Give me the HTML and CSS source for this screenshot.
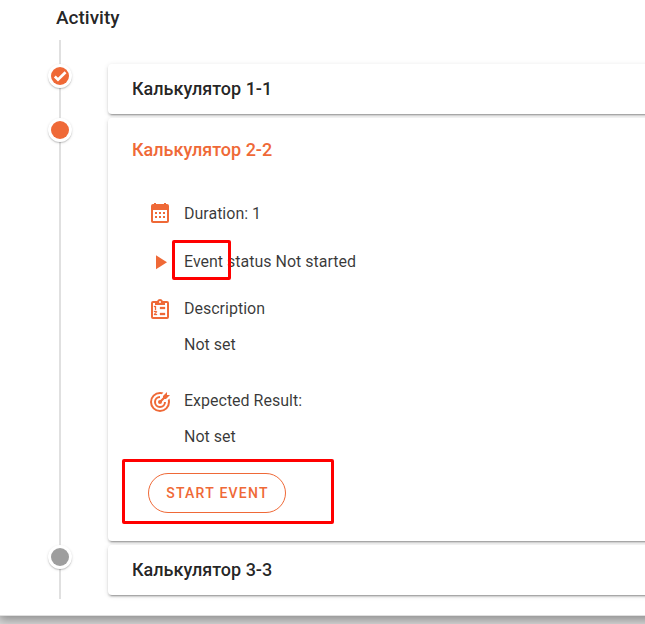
FILE: index.html
```html
<!DOCTYPE html>
<html lang="en">
<head>
<meta charset="utf-8">
<title>Activity</title>
<link rel="stylesheet" href="styles.css">
</head>
<body>
<main class="panel">
  <h1 class="title">Activity</h1>
  <div class="timeline">
    <div class="item">
      <div class="divider"><span class="dot"><span class="dot-inner"><svg viewBox="0 0 24 24"><path d="M9 20.42 2.79 14.21 5.62 11.38 9 14.77 18.88 4.88 21.71 7.71Z"/></svg></span></span></div>
      <section class="card"><h2 class="card-title">Калькулятор 1-1</h2></section>
    </div>
    <div class="item">
      <div class="divider"><span class="dot"><span class="dot-inner"></span></span></div>
      <section class="card card-open">
        <h2 class="card-title active">Калькулятор 2-2</h2>
        <div class="details">
          <div class="row">
            <svg class="icon" viewBox="0 0 24 24"><path d="M9 10V12H7V10H9M13 10V12H11V10H13M17 10V12H15V10H17M19 2A2 2 0 0 1 21 4V19A2 2 0 0 1 19 21H5C3.89 21 3 20.1 3 19V4A2 2 0 0 1 5 2H6V1H8V2H16V1H18V2H19M19 19V8H5V19H19M9 14V16H7V14H9M13 14V16H11V14H13M17 14V16H15V14H17Z"/></svg>
            <span>Duration: 1</span>
          </div>
          <div class="row status">
            <svg class="icon" viewBox="0 0 24 24"><path d="M8 5.14V19.14L19 12.14Z"/></svg>
            <span>Event status Not started</span>
            <span class="mark mark-word"></span>
          </div>
          <div class="row description">
            <svg class="icon" viewBox="0 0 24 24"><path fill-rule="evenodd" d="M19 3H14.82C14.4 1.84 13.3 1 12 1S9.6 1.84 9.18 3H5A2 2 0 0 0 3 5V19A2 2 0 0 0 5 21H19A2 2 0 0 0 21 19V5A2 2 0 0 0 19 3ZM12 3A1 1 0 1 1 12 5A1 1 0 0 1 12 3ZM5 5H7V7H17V5H19V19H5Z"/><path d="M7 12H8V8H6V9H7ZM12 9H17V11H12ZM12 15H17V17H12ZM6 14V13H8.25A.75.75 0 0 1 9 13.75C9 13.95 8.92 14.14 8.79 14.27L7.12 16H9V17H6V16.08L8 14Z" class="list"/></svg>
            <span>Description</span>
          </div>
          <p class="value">Not set</p>
          <div class="row result">
            <svg class="icon" viewBox="0 0 24 24"><path d="M12 2A10 10 0 1 0 22 12C22 10.84 21.79 9.69 21.39 8.61L19.79 10.21C19.93 10.8 20 11.4 20 12A8 8 0 1 1 12 4C12.6 4 13.2 4.07 13.79 4.21L15.4 2.6C14.31 2.21 13.16 2 12 2M19 2 15 6V7.5L12.45 10.05C12.3 10 12.15 10 12 10A2 2 0 1 0 14 12C14 11.85 14 11.7 13.95 11.55L16.5 9H18L22 5H19V2M12 6A6 6 0 1 0 18 12H16A4 4 0 1 1 12 8V6Z"/></svg>
            <span>Expected Result:</span>
          </div>
          <p class="value">Not set</p>
          <div class="action">
            <button class="button" type="button">START EVENT</button>
            <span class="mark mark-button"></span>
          </div>
        </div>
      </section>
    </div>
    <div class="item">
      <div class="divider"><span class="dot"><span class="dot-inner idle"></span></span></div>
      <section class="card"><h2 class="card-title">Калькулятор 3-3</h2></section>
    </div>
  </div>
</main>
</body>
</html>
```
FILE: styles.css
```css
* {
  box-sizing: border-box;
}

body {
  margin: 0;
  height: 624px;
  overflow: hidden;
  background: #dadada;
  color: rgba(0, 0, 0, .87);
  font-family: Roboto, sans-serif;
}

.panel {
  width: 665px;
  height: 616px;
  border-bottom: 1px solid #e0e0e0;
  background: #fff;
  box-shadow: 0 3px 10px 1px rgba(0, 0, 0, .36);
}

.title {
  height: 40px;
  margin: 0;
  padding: 6px 0 0 56px;
  font-size: 19px;
  font-weight: 500;
  line-height: 24px;
}

.timeline {
  height: 559px;
  padding-top: 24px;
  background: linear-gradient(#e0e0e0, #e0e0e0) 59px 0 / 2px 100% no-repeat;
}

.item {
  display: flex;
  margin-bottom: 4px;
}

.divider {
  width: 108px;
  padding-left: 48px;
}

.dot {
  display: flex;
  align-items: center;
  justify-content: center;
  width: 24px;
  height: 24px;
  border-radius: 50%;
  background: #fff;
  box-shadow: 0 1px 1px rgba(0, 0, 0, .16), 0 1px 3px rgba(0, 0, 0, .12);
}

.dot-inner {
  display: flex;
  align-items: center;
  justify-content: center;
  width: 18px;
  height: 18px;
  border-radius: 50%;
  background: #ef6937;
}

.dot-inner svg {
  width: 16px;
  height: 16px;
  fill: #fff;
}

.dot-inner.idle {
  background: #9e9e9e;
}

.card {
  flex: 1;
  height: 50px;
  padding: 9px 24px;
  border-radius: 4px;
  background: #fff;
  box-shadow: 0 3px 1px -2px rgba(0, 0, 0, .2), 0 2px 2px rgba(0, 0, 0, .14), 0 1px 5px rgba(0, 0, 0, .12);
}

.card-open {
  height: 423px;
  padding-top: 16px;
}

.card-title {
  margin: 0;
  font-size: 18px;
  font-weight: 500;
  line-height: 32px;
}

.card-title.active {
  color: #ef6937;
}

.details {
  padding: 36px 0 0 16px;
  color: rgba(0, 0, 0, .78);
  font-size: 16px;
  line-height: 24px;
}

.row {
  display: flex;
  gap: 12px;
  height: 24px;
}

.icon {
  flex: none;
  width: 24px;
  height: 24px;
  fill: #ef6937;
}

.list {
  stroke: #ef6937;
  stroke-width: .3;
}

.status {
  position: relative;
  margin-top: 24px;
}

.description {
  margin-top: 23px;
}

.description .icon,
.result .icon {
  margin-top: 1px;
}

.value {
  margin: 12px 0 0 36px;
}

.result {
  margin-top: 32px;
}

.action {
  position: relative;
  height: 40px;
  margin-top: 24px;
}

.button {
  width: 138px;
  height: 40px;
  padding: 0 0 0 1px;
  border: 1px solid #ef6937;
  border-radius: 20px;
  background: transparent;
  color: #ef6937;
  font: 500 14px/20px Roboto, sans-serif;
  letter-spacing: 1.25px;
}

.mark {
  position: absolute;
  border: 3px solid #f00;
  border-radius: 2px;
}

.mark-word {
  left: 24px;
  top: -10px;
  width: 59px;
  height: 40px;
}

.mark-button {
  left: -26px;
  top: -14px;
  width: 212px;
  height: 65px;
}
```
